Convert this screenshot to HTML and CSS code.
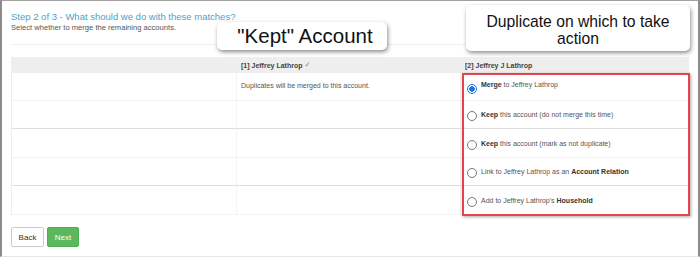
FILE: index.html
```html
<!DOCTYPE html>
<html>
<head>
<meta charset="utf-8">
<link rel="stylesheet" href="styles.css">
</head>
<body>
<div class="frame">
  <div class="page">
    <h2 class="title">Step 2 of 3 - What should we do with these matches?</h2>
    <p class="subtitle">Select whether to merge the remaining accounts.</p>
    <div class="rule"></div>
    <div class="grid">
      <div class="cell head"></div>
      <div class="cell head b">[1] Jeffrey Lathrop&nbsp;<span class="check">✓</span></div>
      <div class="cell head b">[2] Jeffrey J Lathrop</div>

      <div class="cell r1"></div>
      <div class="cell r1 top">Duplicates will be merged to this account.</div>
      <div class="cell r1 top opt"><span class="radio on"></span><span><b>Merge</b> to Jeffrey Lathrop</span></div>

      <div class="cell r2 dark"></div>
      <div class="cell r2 dark"></div>
      <div class="cell r2 dark opt"><span class="radio"></span><span><b>Keep</b> this account (do not merge this time)</span></div>

      <div class="cell r3"></div>
      <div class="cell r3"></div>
      <div class="cell r3 opt"><span class="radio"></span><span><b>Keep</b> this account (mark as not duplicate)</span></div>

      <div class="cell r4 dark"></div>
      <div class="cell r4 dark"></div>
      <div class="cell r4 dark opt"><span class="radio"></span><span>Link to Jeffrey Lathrop as an <b>Account Relation</b></span></div>

      <div class="cell r5"></div>
      <div class="cell r5"></div>
      <div class="cell r5 opt"><span class="radio"></span><span>Add to Jeffrey Lathrop's <b>Household</b></span></div>
    </div>
    <div class="actions">
      <button class="btn back">Back</button>
      <button class="btn next">Next</button>
    </div>
  </div>
  <div class="callout kept">"Kept" Account</div>
  <div class="callout dup">Duplicate on which to take action</div>
  <div class="highlight"></div>
</div>
</body>
</html>
```
FILE: styles.css
```css
html, body {
  margin: 0;
  padding: 0;
  background: #fff;
}
.frame {
  position: relative;
  width: 700px;
  height: 257px;
  box-sizing: border-box;
  border-top: 1px solid #a0a0a0;
  border-left: 2px solid #8c8c8c;
  border-right: 2px solid #8c8c8c;
  border-bottom: 1px solid #e6e6e6;
  font-family: "Liberation Sans", Arial, sans-serif;
  overflow: hidden;
}
.page {
  padding: 9px 10px 0 9px;
}
.title {
  margin: 0;
  font-size: 9.5px;
  font-weight: normal;
  color: #4aa3cb;
  line-height: 13px;
}
.subtitle {
  margin: 0 0 0;
  font-size: 7.6px;
  color: #555;
  line-height: 10px;
}
.rule {
  height: 1px;
  background: #ededed;
  margin: 11px 0 0;
  width: 677px;
}
.grid {
  display: grid;
  grid-template-columns: 225px 224px 228px;
  margin-top: 12px;
  width: 677px;
  border-left: 1px solid #eee;
  font-size: 7px;
  color: #555;
}
.cell {
  box-sizing: border-box;
  border-bottom: 1px solid #f2f2f2;
  border-right: 1px solid #f4f4f4;
  padding: 0 4px;
  display: flex;
  align-items: center;
}
.cell.dark {
  border-bottom-color: #dedede;
}
.head {
  height: 16px;
  background: #eeeeee;
  border-right: none;
  border-bottom: none;
  color: #444;
}
.b {
  font-weight: bold;
}
.check {
  font-family: "DejaVu Sans", sans-serif;
  font-weight: normal;
  font-size: 7px;
  color: #777;
}
.r1 { height: 28px; }
.r2 { height: 28px; }
.r3 { height: 29px; }
.r4 { height: 28px; }
.r5 { height: 29px; }
.top {
  align-items: flex-start;
  padding-top: 9px;
}
.opt {
  padding-left: 6px;
}
.opt b {
  color: #333;
}
.opt.top {
  padding-top: 8px;
}
.radio {
  display: inline-block;
  width: 8px;
  height: 8px;
  border: 1px solid #777;
  border-radius: 50%;
  margin: 3px 4px 0 0;
  background: #fff;
  flex: none;
  align-self: center;
}
.top .radio {
  align-self: flex-start;
}
.radio.on {
  border-color: #1a73e8;
  background: radial-gradient(circle, #1a73e8 0 2.5px, #fff 3px);
}
.actions {
  display: flex;
  gap: 3px;
  margin-top: 12px;
}
.btn {
  font-family: "Liberation Sans", Arial, sans-serif;
  font-size: 8px;
  height: 20px;
  border-radius: 2px;
  padding: 0;
}
.back {
  width: 33px;
  background: #fff;
  border: 1px solid #ccc;
  color: #333;
}
.next {
  width: 32px;
  background: #5cb85c;
  border: 1px solid #4cae4c;
  color: #fff;
}
.callout {
  position: absolute;
  background: #fff;
  border-radius: 5px;
  box-shadow: 1px 2px 4px rgba(0,0,0,0.45);
  color: #111;
  text-align: center;
  font-family: "Liberation Sans", Arial, sans-serif;
  display: flex;
  align-items: center;
  justify-content: center;
}
.kept {
  left: 215px;
  top: 21px;
  width: 170px;
  height: 28px;
  font-size: 20.5px;
  padding-left: 6px;
  box-sizing: border-box;
}
.dup {
  left: 464px;
  top: 4px;
  width: 224px;
  height: 46px;
  font-size: 15.7px;
  line-height: 17px;
  padding: 3px 8px 0;
  box-sizing: border-box;
}
.highlight {
  position: absolute;
  left: 460px;
  top: 72px;
  width: 228px;
  height: 143px;
  box-sizing: border-box;
  border: 2px solid #e8434d;
  box-shadow: 1px 1px 3px rgba(0,0,0,0.35);
}
```
